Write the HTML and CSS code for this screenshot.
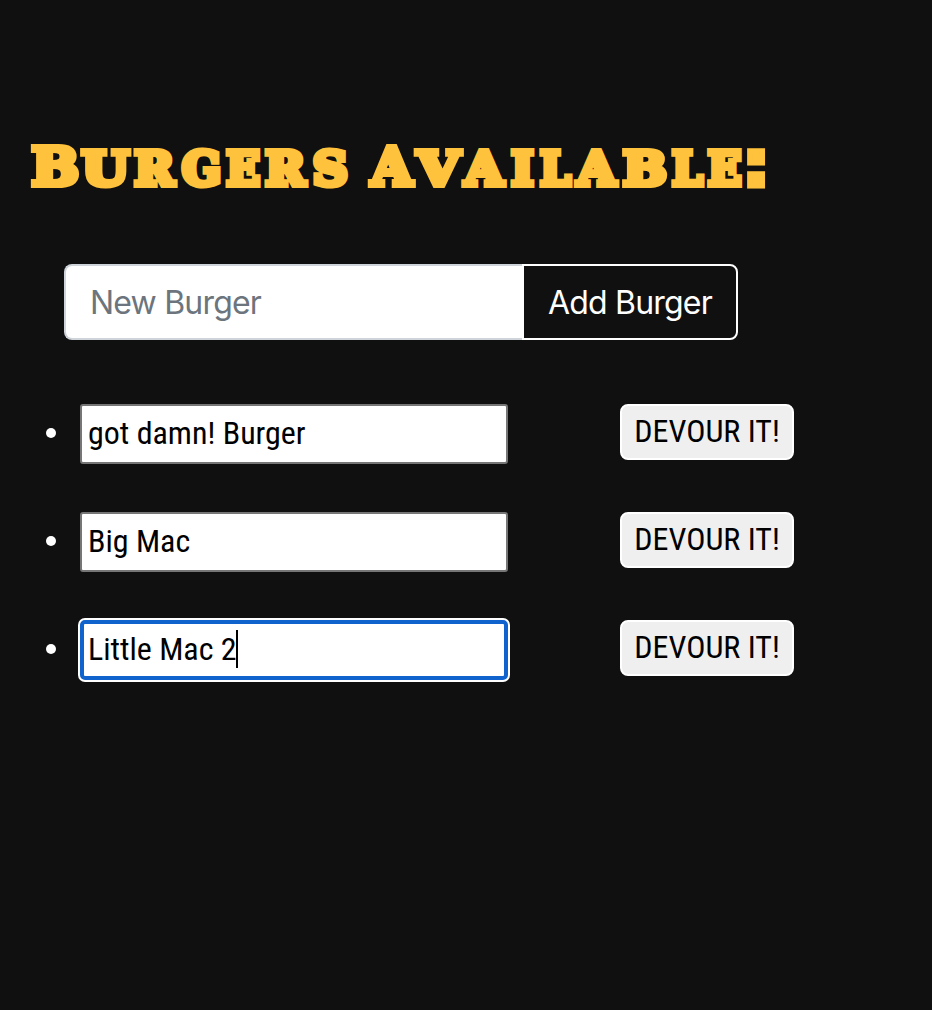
FILE: index.html
```html
<!DOCTYPE html>
<html lang="en">
<head>
<meta charset="utf-8">
<title>Burgers</title>
<link rel="stylesheet" href="styles.css">
</head>
<body>
<main class="page">
  <h1 class="title">
    <svg class="title-art" width="780" height="64" viewBox="28 0 780 64">
      <text class="cap" transform="translate(30.3 51) scale(1.08 1)" x="1.2">B</text>
      <text transform="translate(80.3 51) scale(1.165 1)" x="1.2">U</text>
      <text transform="translate(133 51) scale(1.03 1)" x="1.2">R</text>
      <text transform="translate(181 51) scale(.985 1)" x=".9">G</text>
      <text transform="translate(225 51) scale(.95 1)" x="1.2">E</text>
      <text transform="translate(264 51) scale(1.03 1)" x="1.2">R</text>
      <text transform="translate(312.7 51) scale(1.04 1)" x="0">S</text>
      <text class="cap" transform="translate(368.3 51) scale(1.015 1)" x="3">A</text>
      <text transform="translate(414 51) scale(1.165 1)" x="3">V</text>
      <text transform="translate(461.7 51) scale(1.06 1)" x="3">A</text>
      <text transform="translate(510 51) scale(1.02 1)" x="1.2">I</text>
      <text transform="translate(539 51) scale(.935 1)" x="1.2">L</text>
      <text transform="translate(574 51) scale(1.06 1)" x="3">A</text>
      <text transform="translate(621.7 51) scale(1.11 1)" x="1.2">B</text>
      <text transform="translate(671 51) scale(.935 1)" x="1.2">L</text>
      <text transform="translate(706.7 51) scale(.95 1)" x="1.2">E</text>
      <text class="colon" transform="translate(747 51.5) scale(1.1 1)" x="-4.5">:</text>
    </svg>
  </h1>
  <form class="add-form">
    <div class="new-burger">New Burger</div>
    <button class="add-button" type="button">Add Burger</button>
  </form>
  <ul class="burgers">
    <li class="burger"><i class="dot"></i><div class="name"><span class="text">got damn! Burger</span></div><button class="devour" type="button"><span class="text">DEVOUR IT!</span></button></li>
    <li class="burger"><i class="dot"></i><div class="name"><span class="text">Big Mac</span></div><button class="devour" type="button"><span class="text">DEVOUR IT!</span></button></li>
    <li class="burger"><i class="dot"></i><div class="name focused"><span class="text">Little Mac 2</span><i class="caret"></i></div><button class="devour" type="button"><span class="text">DEVOUR IT!</span></button></li>
  </ul>
</main>
</body>
</html>
```

FILE: styles.css
```css
* { box-sizing: border-box; }
body { margin: 0; background: #101010; color: #fff; }
.page { padding-top: 134px; height: 1010px; }
.title { margin: 0 0 66px 28px; height: 64px; }
.title-art { display: block; overflow: visible; }
.title-art text {
  font-family: "DejaVu Serif", serif;
  font-size: 46.6px;
  font-weight: 700;
  fill: #ffc23c;
  stroke: #ffc23c;
  stroke-width: 6px;
  stroke-linejoin: miter;
  stroke-miterlimit: 2;
}
.title-art .cap { font-size: 52px; }
.title-art .colon { font-family: "DejaVu Sans", sans-serif; font-size: 64px; stroke-width: 5px; }
.add-form {
  display: flex;
  width: 674px;
  height: 76px;
  margin: 0 0 64px 64px;
  font: 32px/48px Inter, sans-serif;
  letter-spacing: -0.8px;
}
.new-burger {
  width: 458px;
  padding: 13px 24px;
  background: #fff;
  border: 2px solid #ced4da;
  border-right: 0;
  border-radius: 8px 0 0 8px;
  color: #6c757d;
}
.add-button {
  flex: 1;
  padding: 2px 0 0;
  background: #101010;
  border: 2px solid #fff;
  border-radius: 0 8px 8px 0;
  color: #fff;
  font: inherit;
  letter-spacing: inherit;
  white-space: nowrap;
}
.burgers {
  display: flex;
  flex-direction: column;
  gap: 48px;
  list-style: none;
  margin: 0;
  padding: 0 0 0 46px;
}
.burger { display: flex; align-items: flex-start; height: 60px; }
.dot { width: 10px; height: 10px; margin: 24px 24px 0 0; border-radius: 50%; background: #fff; }
.name {
  display: flex;
  align-items: center;
  width: 428px;
  height: 60px;
  padding: 0 0 2px 6px;
  background: #fff;
  border: 2px solid #767676;
  border-radius: 3px;
  color: #000;
}
.focused {
  padding: 0 0 2px 4px;
  border: 4px solid #1062cc;
  border-radius: 5px;
  box-shadow: 0 0 0 2px #fff;
}
.text { font: 32px/38px "Roboto Condensed", Roboto, sans-serif; font-stretch: 75%; white-space: nowrap; }
.caret { width: 2px; height: 38px; margin-left: -1px; background: #000; }
.devour {
  width: 174px;
  height: 56px;
  margin-left: 112px;
  padding: 0 0 2px;
  background: #efefef;
  border: 2px solid #fff;
  border-radius: 8px;
  color: #000;
}
```
